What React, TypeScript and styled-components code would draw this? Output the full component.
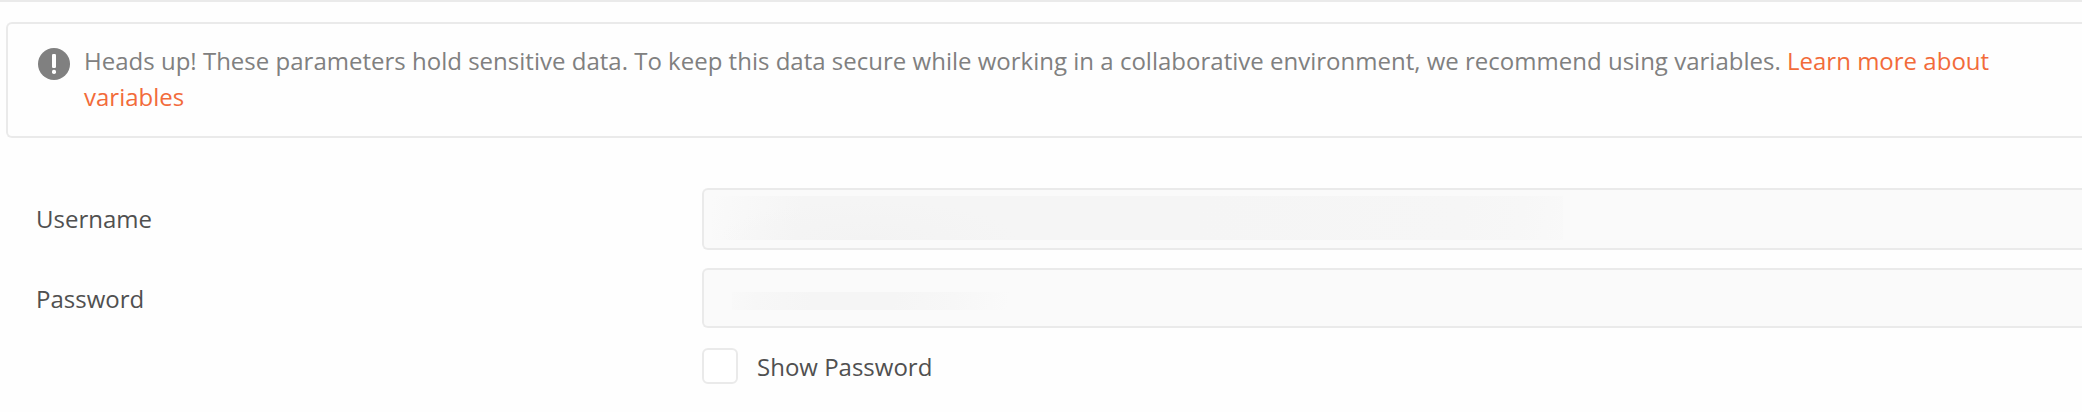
import React from "react";
import styled, { createGlobalStyle } from "styled-components";

const GlobalStyle = createGlobalStyle`
  *, *::before, *::after { box-sizing: border-box; }
  body {
    margin: 0;
    background: #fefefe;
    overflow: hidden;
    font-family: "Open Sans", sans-serif;
    font-size: 24px;
    line-height: 36px;
    color: #505050;
  }
`;

const Panel = styled.main`
  width: 100%;
  height: 412px;
  overflow: hidden;
  border-top: 2px solid #eaeaea;
  padding: 20px 0 0 6px;
`;

const Banner = styled.section`
  display: flex;
  align-items: flex-start;
  gap: 14px;
  height: 116px;
  padding: 19px 80px 0 30px;
  border: 2px solid #eaeaea;
  border-right: 0;
  border-radius: 6px 0 0 6px;
  color: #808080;
`;

const AlertIcon = styled.svg`
  flex: none;
  width: 32px;
  height: 32px;
  margin-top: 5px;
`;

const Message = styled.p`
  margin: 0;
  letter-spacing: 0.008px;
`;

const Link = styled.a`
  color: #f26b3a;
  text-decoration: none;
`;

const Form = styled.form`
  display: grid;
  grid-template-columns: 666px 1fr;
  padding: 50px 0 0 30px;
`;

const Label = styled.label`
  padding-top: 13px;
`;

const Field = styled.div<{ $height: number }>`
  height: ${(p) => p.$height}px;
  margin-bottom: 18px;
  border: 2px solid #eaeaea;
  border-right: 0;
  border-radius: 6px 0 0 6px;
  background: #fafafa;
`;

const UsernameMask = styled.div`
  width: 851px;
  height: 44px;
  margin: 6px 0 0 8px;
  background:
    radial-gradient(ellipse 150px 40px at 155px 44px, #f3f3f3, rgba(244, 244, 244, 0)),
    linear-gradient(100deg, #fafafa 0, #f8f8f8 35px, #f5f5f5 90px, #f5f5f5 480px, #f6f6f6 740px, #f7f7f7 800px, #f9f9f9 852px);
`;

const PasswordMask = styled.div`
  width: 278px;
  height: 18px;
  margin: 22px 0 0 28px;
  background: linear-gradient(100deg, #f9f9f9, #f7f7f7 25px, #f5f5f5 80px, #f5f5f5 160px, #f7f7f7 220px, #fafafa 275px);
`;

const CheckRow = styled.label`
  grid-column: 2;
  display: flex;
  gap: 19px;
  margin-top: 2px;
`;

const Checkbox = styled.input`
  appearance: none;
  flex: none;
  width: 36px;
  height: 36px;
  margin: 0;
  border: 2px solid #eaeaea;
  border-radius: 6px;
  background: #fff;
`;

const CheckText = styled.span`
  padding-top: 1px;
`;

export default function App() {
  return (
    <>
      <GlobalStyle />
      <Panel>
        <Banner>
          <AlertIcon viewBox="0 0 32 32" aria-hidden="true">
            <circle cx="16" cy="16" r="16" fill="#808080" />
            <rect x="14" y="6" width="4" height="14" rx="1.2" fill="#fff" />
            <rect x="14" y="21.7" width="4" height="4.3" rx="1.8" fill="#fff" />
          </AlertIcon>
          <Message>
            Heads up! These parameters hold sensitive data. To keep this data secure while working in a
            collaborative environment, we recommend using variables.{" "}
            <Link href="#">Learn more about variables</Link>
          </Message>
        </Banner>
        <Form>
          <Label>Username</Label>
          <Field $height={62}>
            <UsernameMask />
          </Field>
          <Label>Password</Label>
          <Field $height={60}>
            <PasswordMask />
          </Field>
          <CheckRow>
            <Checkbox type="checkbox" />
            <CheckText>Show Password</CheckText>
          </CheckRow>
        </Form>
      </Panel>
    </>
  );
}
